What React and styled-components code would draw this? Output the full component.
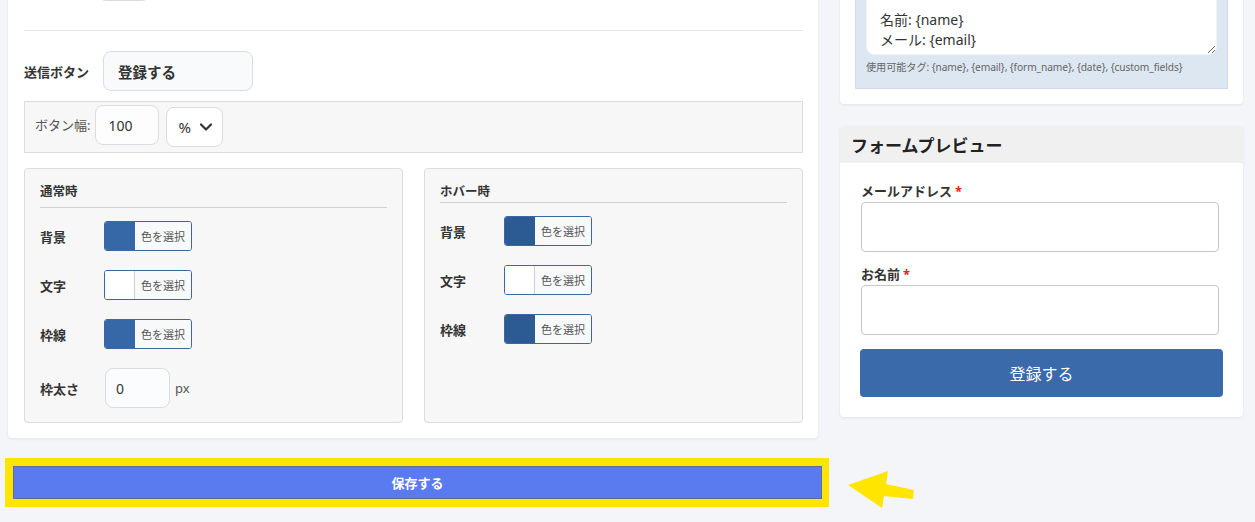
import styled, { createGlobalStyle } from 'styled-components';

const GlobalStyle = createGlobalStyle`
  body {
    margin: 0;
    background: #f3f5f8;
    font-family: 'Noto Sans', 'Noto Sans CJK JP', sans-serif;
    color: #333;
    overflow: hidden;
  }
  * { box-sizing: border-box; }
`;

const Main = styled.div`
  display: flex;
  align-items: flex-start;
  gap: 22px;
  padding: 0 12px 0 8px;
  margin-top: -53px;
`;

const Card = styled.div`
  background: #fff;
  border-radius: 4px;
  box-shadow: 0 1px 3px rgba(0, 0, 0, 0.08);
`;

const LeftCard = styled(Card)`
  width: 810px;
  padding: 16px 15px 15px 16px;
`;

const Row = styled.div`
  display: flex;
  align-items: center;
`;

const PrevRow = styled(Row)`
  height: 38px;
  padding-left: 74px;
`;

const FieldLabel = styled.div`
  width: ${(p) => p.$w || 79}px;
  font-size: 13px;
  font-weight: 700;
  color: #333;
  flex-shrink: 0;
`;

const TextInput = styled.div`
  width: ${(p) => p.$w}px;
  height: ${(p) => p.$h || 40}px;
  border: 1px solid #d9dde3;
  border-radius: 8px;
  background: ${(p) => p.$bg || '#f8fafc'};
  padding-left: ${(p) => p.$pl || 14}px;
  display: flex;
  align-items: center;
  font-size: ${(p) => (p.$bold ? 14.5 : 14)}px;
  font-weight: ${(p) => (p.$bold ? 700 : 400)};
  color: #333;
  flex-shrink: 0;
`;

const Divider = styled.div`
  border-top: 1px solid #e6e8eb;
  margin: 29px 0 20px;
`;

const WidthBox = styled.div`
  margin-top: 10px;
  height: 52px;
  border: 1px solid #dcdcdc;
  background: #f7f7f7;
  display: flex;
  align-items: flex-start;
  padding: 3px 10px;
`;

const SmallLabel = styled.span`
  font-size: 13px;
  color: #555;
  line-height: 40px;
  margin-right: 5px;
`;

const Select = styled.div`
  margin: 2px 0 0 7px;
  width: 57px;
  height: 40px;
  border: 1px solid #dcdcdc;
  border-radius: 8px;
  background: #fff;
  display: flex;
  align-items: center;
  justify-content: space-between;
  padding: 0 8px 0 11px;
  font-size: 15px;
  color: #333;
`;

const Panels = styled.div`
  margin-top: 15px;
  display: grid;
  grid-template-columns: 1fr 1fr;
  gap: 21px;
`;

const Panel = styled.div`
  background: #f7f7f7;
  border: 1px solid #dcdcdc;
  border-radius: 4px;
  padding: 15px 15px 14px;
`;

const PanelTitle = styled.div`
  font-size: 12.5px;
  font-weight: 700;
  line-height: 16px;
  color: #333;
  padding-bottom: ${(p) => p.$pb}px;
  border-bottom: 1px solid #cfcfcf;
  margin-bottom: 13px;
`;

const PanelRows = styled.div`
  display: flex;
  flex-direction: column;
  gap: 19px;
`;

const Picker = styled.div`
  display: flex;
  width: 88px;
  height: 30px;
  border: 1px solid #3b67a3;
  border-radius: 3px;
  overflow: hidden;
`;

const Swatch = styled.div`
  width: 30px;
  background: ${(p) => p.$color};
  border-right: 1px solid ${(p) => (p.$color === '#fff' ? '#cfcfcf' : p.$color)};
`;

const PickerText = styled.div`
  flex: 1;
  background: #f8f9fa;
  font-size: 11px;
  color: #555;
  display: flex;
  align-items: center;
  justify-content: center;
`;

const Unit = styled.span`
  margin-left: 5px;
  font-size: 13px;
  color: #555;
`;

const RightCol = styled.div`
  width: 403px;
  display: flex;
  flex-direction: column;
  gap: 22px;
`;

const SettingsCard = styled(Card)`
  padding: 15px;
`;

const TagBox = styled.div`
  background: #dde7f2;
  border: 1px solid #cfdbe8;
  padding: 11px 10px 14px;
`;

const MailText = styled.textarea`
  display: block;
  width: 100%;
  height: 81px;
  border: 1px solid #eef1f5;
  border-radius: 8px;
  background: #fff;
  padding: 15px 13px 0;
  font-family: inherit;
  font-size: 14px;
  line-height: 20px;
  color: #333;
  resize: vertical;
  overflow: hidden;
  outline: none;
`;

const Hint = styled.div`
  margin-top: 5px;
  font-size: 10.2px;
  line-height: 14px;
  color: #666;
  letter-spacing: -0.1px;
`;

const PreviewHeader = styled.div`
  height: 37px;
  background: #f0f0f0;
  border-radius: 4px 4px 0 0;
  padding-left: 11px;
  display: flex;
  align-items: center;
  font-size: 17px;
  font-weight: 700;
  color: #222;
`;

const PreviewBody = styled.div`
  padding: 18px 20px 20px;
  display: flex;
  flex-direction: column;
  gap: 12px;
`;

const PreviewLabel = styled.div`
  font-size: 13px;
  font-weight: 700;
  line-height: 20px;
  color: #333;
  margin-bottom: 1px;
  padding-left: 1px;

  span {
    color: #e02424;
    margin-left: 3px;
  }
`;

const PreviewInput = styled.div`
  margin-left: 1px;
  width: 358px;
  height: 50px;
  border: 1px solid #c8c8c8;
  border-radius: 4px;
  background: #fff;
`;

const PreviewButton = styled.button`
  margin-top: 2px;
  height: 48px;
  border: none;
  border-radius: 4px;
  background: #3a6aaa;
  color: #fff;
  font-family: inherit;
  font-size: 16px;
`;

const SaveRow = styled.div`
  margin-top: 20px;
  padding-left: 5px;
  display: flex;
  align-items: flex-start;
  gap: 17px;
`;

const Highlight = styled.div`
  border-style: solid;
  border-color: #ffe500;
  border-width: 8px 7px 8px 8px;
`;

const SaveButton = styled.button`
  display: block;
  width: 809px;
  height: 33px;
  border: none;
  box-shadow: inset 0 0 0 1px #5d6c9c;
  background: #5a7af0;
  color: #fff;
  font-family: inherit;
  font-size: 13px;
  font-weight: 700;
`;

const Arrow = styled.svg`
  margin-top: 9px;
`;

const ColorRow = ({ label, color }) => (
  <Row>
    <FieldLabel $w={64}>{label}</FieldLabel>
    <Picker>
      <Swatch $color={color} />
      <PickerText>色を選択</PickerText>
    </Picker>
  </Row>
);

export default function App() {
  return (
    <>
      <GlobalStyle />
      <Main>
        <LeftCard>
          <PrevRow>
            <TextInput $w={52} $h={38} />
          </PrevRow>
          <Divider />
          <Row>
            <FieldLabel>送信ボタン</FieldLabel>
            <TextInput $w={150} $bold>
              登録する
            </TextInput>
          </Row>
          <WidthBox>
            <SmallLabel>ボタン幅:</SmallLabel>
            <TextInput $w={64} $pl={12} $bg="#fdfdfd">
              100
            </TextInput>
            <Select>
              %
              <svg width="16" height="16" viewBox="0 0 16 16">
                <path
                  d="M3 5.5l5 5 5-5"
                  fill="none"
                  stroke="#333"
                  strokeWidth="2.2"
                  strokeLinecap="round"
                  strokeLinejoin="round"
                />
              </svg>
            </Select>
          </WidthBox>
          <Panels>
            <Panel>
              <PanelTitle $pb={7}>通常時</PanelTitle>
              <PanelRows>
                <ColorRow label="背景" color="#3667a6" />
                <ColorRow label="文字" color="#fff" />
                <ColorRow label="枠線" color="#3667a6" />
                <Row>
                  <FieldLabel $w={65}>枠太さ</FieldLabel>
                  <TextInput $w={65} $pl={10} $bg="#fbfcfd">
                    0
                  </TextInput>
                  <Unit>px</Unit>
                </Row>
              </PanelRows>
            </Panel>
            <Panel>
              <PanelTitle $pb={2}>ホバー時</PanelTitle>
              <PanelRows>
                <ColorRow label="背景" color="#2c5b94" />
                <ColorRow label="文字" color="#fff" />
                <ColorRow label="枠線" color="#2c5b94" />
              </PanelRows>
            </Panel>
          </Panels>
        </LeftCard>

        <RightCol>
          <SettingsCard>
            <TagBox>
              <MailText
                readOnly
                value={'\n名前: {name}\nメール: {email}\n'}
              />
              <Hint>
                使用可能タグ: {'{name}'}, {'{email}'}, {'{form_name}'}, {'{date}'},{' '}
                {'{custom_fields}'}
              </Hint>
            </TagBox>
          </SettingsCard>
          <Card>
            <PreviewHeader>フォームプレビュー</PreviewHeader>
            <PreviewBody>
              <div>
                <PreviewLabel>
                  メールアドレス<span>*</span>
                </PreviewLabel>
                <PreviewInput />
              </div>
              <div>
                <PreviewLabel>
                  お名前<span>*</span>
                </PreviewLabel>
                <PreviewInput />
              </div>
              <PreviewButton>登録する</PreviewButton>
            </PreviewBody>
          </Card>
        </RightCol>
      </Main>

      <SaveRow>
        <Highlight>
          <SaveButton>保存する</SaveButton>
        </Highlight>
        <Arrow width="70" height="42" viewBox="0 0 70 42">
          <polygon
            points="2,18 42,4 40,17 68,23 67,32 38,29 36,41"
            fill="#ffe500"
          />
        </Arrow>
      </SaveRow>
    </>
  );
}
